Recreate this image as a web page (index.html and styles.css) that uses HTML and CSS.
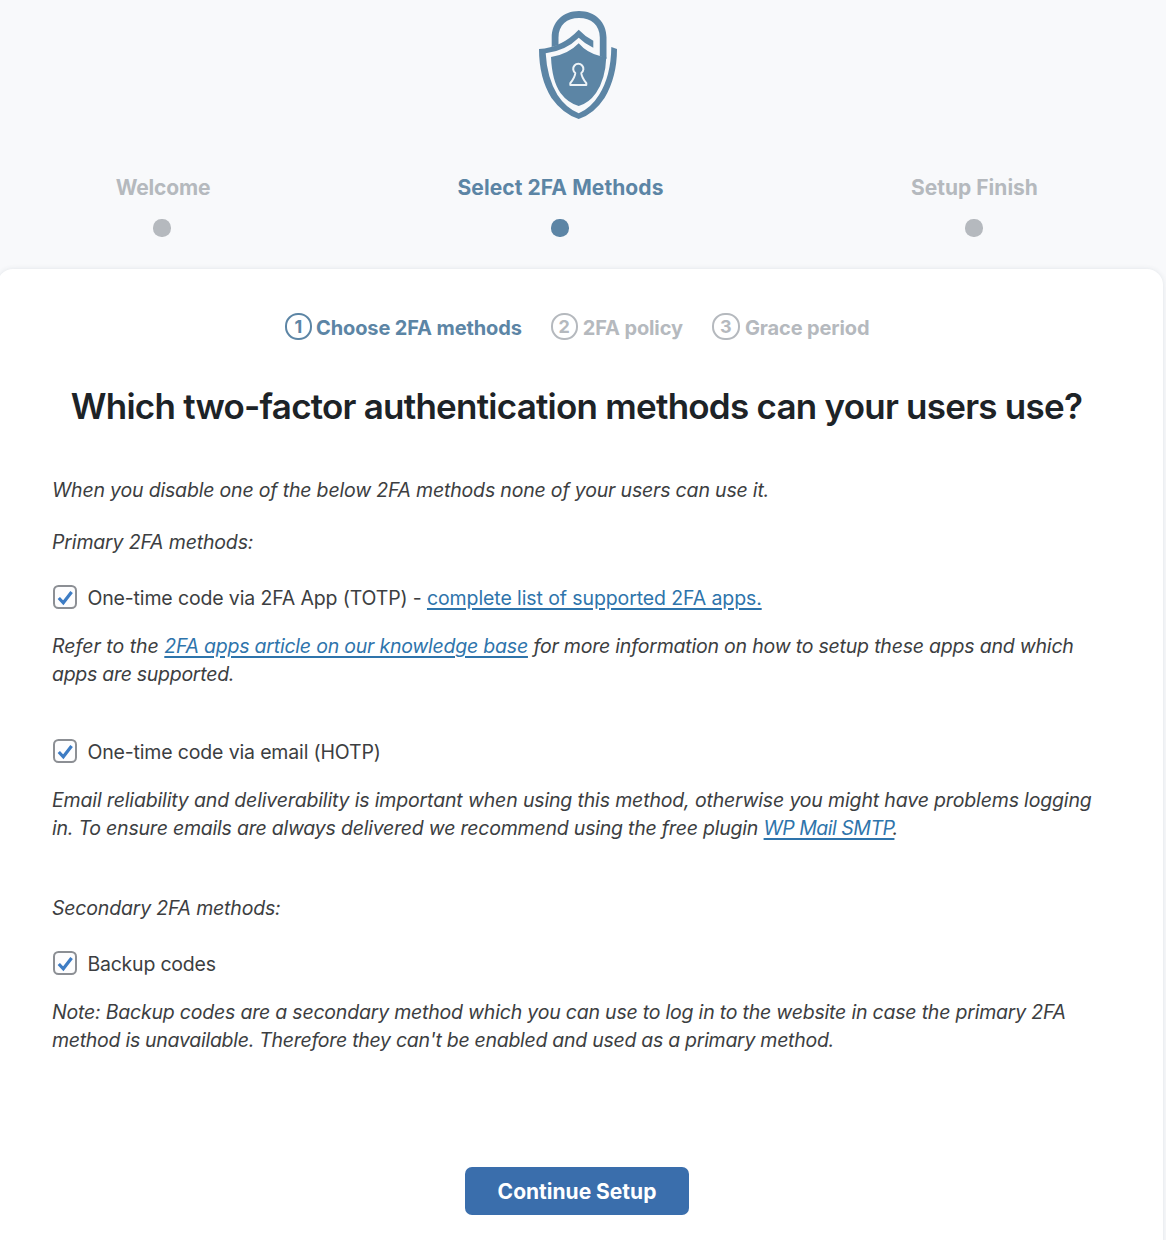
FILE: index.html
```html
<!DOCTYPE html>
<html lang="en">
<head>
<meta charset="utf-8">
<title>2FA setup wizard</title>
<link rel="stylesheet" href="styles.css">
</head>
<body>
<header class="wizard-header">
  <svg class="logo" viewBox="0 0 78 108" width="78" height="108">
    <path class="fill" d="M12.700 36V26.500C12.700 11 24 0 40 0S67.500 11 67.500 26.500V48L60.800 45V26.500C60.800 14 52 7 40 7S19.500 14 19.500 26.500V34Z"/>
    <path class="fill" d="M0 38Q23 36.500 39.700 18.700Q46 25.500 54.300 29.700V36.700Q46 33 39.700 26.700Q27 39.500 6.700 42.300Q8 67 18.500 84Q27 97 39.700 102.300Q52 97 60 84Q72 65 72.300 36L78 38Q78 66 65.500 87Q55 103 39.700 108Q24 103 12.500 87Q0 67 0 38Z"/>
    <path class="fill" d="M39.700 32.300Q48 42 61 45L67.300 46Q66.500 68 57 82Q50 92 39.700 95Q29 92 21.500 82Q13 70 12 46Q29 43.500 39.700 32.300Z"/>
    <path class="keyhole" d="M36.300 62A5.100 5.100 0 1 1 42.300 62Q42.500 66 47.300 72.200V74H31.300V72.200Q36.100 66 36.300 62Z"/>
  </svg>
  <ol class="steps">
    <li class="step step-welcome"><span class="tight-20">Welcome</span><i class="dot"></i></li>
    <li class="step step-methods active"><span class="wide">Select 2FA Methods</span><i class="dot"></i></li>
    <li class="step step-finish"><span>Setup Finish</span><i class="dot"></i></li>
  </ol>
</header>
<main class="card">
  <ol class="substeps">
    <li class="substep active"><b class="num">1</b><span>Choose 2FA methods</span></li>
    <li class="substep"><b class="num">2</b><span>2FA policy</span></li>
    <li class="substep"><b class="num num-wide">3</b><span>Grace period</span></li>
  </ol>
  <h1>Which two-factor authentication methods can your users use?</h1>
  <p class="intro tight-18">When you disable one of the below 2FA methods none of your users can use it.</p>
  <p class="group tight-15">Primary 2FA methods:</p>
  <label class="option"><svg class="check" viewBox="0 0 24 24"><rect x="1" y="1" width="22" height="22" rx="4.500"/><path d="M5.800 13L10.300 17.800L18.600 7"/></svg><span class="tight-14">One-time code via 2FA App (TOTP) - <a class="tight-10">complete list of supported 2FA apps.</a></span></label>
  <p class="note">Refer to the <a class="tight-22">2FA apps article on our knowledge base</a> <span class="tight-20">for more information on how to setup these apps and which</span><br><span class="tight-28">apps are supported.</span></p>
  <label class="option"><svg class="check" viewBox="0 0 24 24"><rect x="1" y="1" width="22" height="22" rx="4.500"/><path d="M5.800 13L10.300 17.800L18.600 7"/></svg><span class="tight-15">One-time code via email (HOTP)</span></label>
  <p class="note"><span class="tight-15">Email reliability and deliverability is important when using this method, otherwise you might have problems logging</span><br><span class="tight-22">in. To ensure emails are always delivered we recommend using the free plugin</span> <a class="tight-50">WP Mail SMTP</a><span class="stop">.</span></p>
  <p class="group tight-18">Secondary 2FA methods:</p>
  <label class="option"><svg class="check" viewBox="0 0 24 24"><rect x="1" y="1" width="22" height="22" rx="4.500"/><path d="M5.800 13L10.300 17.800L18.600 7"/></svg><span class="tight-22">Backup codes</span></label>
  <p class="note"><span class="tight-20">Note: Backup codes are a secondary method which you can use to log in to the website in case the primary 2FA</span><br><span class="tight-28">method is unavailable. Therefore they can't be enabled and used as a primary method.</span></p>
  <button class="continue">Continue Setup</button>
</main>
</body>
</html>
```
FILE: styles.css
```css
* { box-sizing: border-box; }
body {
  margin: 0;
  height: 1240px;
  overflow: hidden;
  background: #f8f9fb;
  color: #3c3e41;
  font: 19.5px/28px Inter, sans-serif;
}
ol { list-style: none; margin: 0; padding: 0; }
p { margin: 0; white-space: nowrap; }

/* Tracking steps, in hundredths of a pixel */
.wide { letter-spacing: .08px; }
.tight-10 { letter-spacing: -.1px; }
.tight-14 { letter-spacing: -.14px; }
.tight-15 { letter-spacing: -.155px; }
.tight-18 { letter-spacing: -.18px; }
.tight-20 { letter-spacing: -.205px; }
.tight-22 { letter-spacing: -.217px; }
.tight-28 { letter-spacing: -.278px; }
.tight-50 { letter-spacing: -.5px; }
.stop { margin-left: -2px; }

.wizard-header { height: 269px; padding-top: 11px; }
.logo { display: block; margin-left: 539px; }
.fill { fill: #5c85a5; }
.keyhole { fill: none; stroke: #edf3f7; stroke-width: 2; stroke-linejoin: round; }
.steps { display: grid; grid-template-columns: 326px 469px 359px; margin-top: 55px; }
.step { display: flex; flex-direction: column; align-items: center; gap: 17px; color: #b5b9be; font-size: 21px; font-weight: 700; }
.dot { width: 18px; height: 18px; margin-right: 2px; border-radius: 8.5px; background: currentColor; }
.step.active, .substep.active { color: #5c85a5; }

.card { width: 1166px; height: 1000px; margin-left: -3px; padding: 44px 55px 0; background: #fff; border-radius: 16px; box-shadow: 0 0 5px rgba(60, 70, 90, .12); }
.substeps { display: flex; gap: 29px; margin-left: 233px; color: #b5b9be; font-size: 20px; font-weight: 700; letter-spacing: -.12px; }
.substep { display: flex; gap: 5px; height: 30px; white-space: nowrap; line-height: 31px; }
.substep.active { gap: 4px; }
.num { width: 27px; height: 27px; border: 2px solid; border-radius: 13px; line-height: 23px; text-align: center; font-size: 18px; font-weight: 650; letter-spacing: 0; }
.num-wide { width: 28px; }
h1 { margin: 38px 0 0 -7px; color: #1d2327; font-size: 35px; line-height: 50px; font-weight: 600; letter-spacing: -.76px; text-align: center; white-space: nowrap; }
.intro, .group, .note { font-style: italic; }
.intro { margin-top: 45px; }
.group { margin-top: 24px; }
.option { display: flex; align-items: center; gap: 10.4px; margin-top: 28px; height: 28px; white-space: nowrap; }
.check { width: 24px; height: 24px; margin: -1px 0 1px 1px; }
.check rect { fill: #fdfdfe; stroke: #8c8f94; stroke-width: 2; }
.check path { fill: none; stroke: #3d7cc4; stroke-width: 3.2; }
.note { margin-top: 20px; }
.note + .option { margin-top: 50px; }
.note + .group { margin-top: 52px; }
a { color: #2e74ab; text-decoration: underline; text-decoration-thickness: 2px; text-underline-offset: 3px; }
.continue { display: block; width: 224px; height: 48px; margin: 113px 0 0 413px; padding: 1px 0 0; border: 0; border-radius: 7px; background: #3a6eac; color: #fff; font: 700 21px/47px Inter, sans-serif; }
```
